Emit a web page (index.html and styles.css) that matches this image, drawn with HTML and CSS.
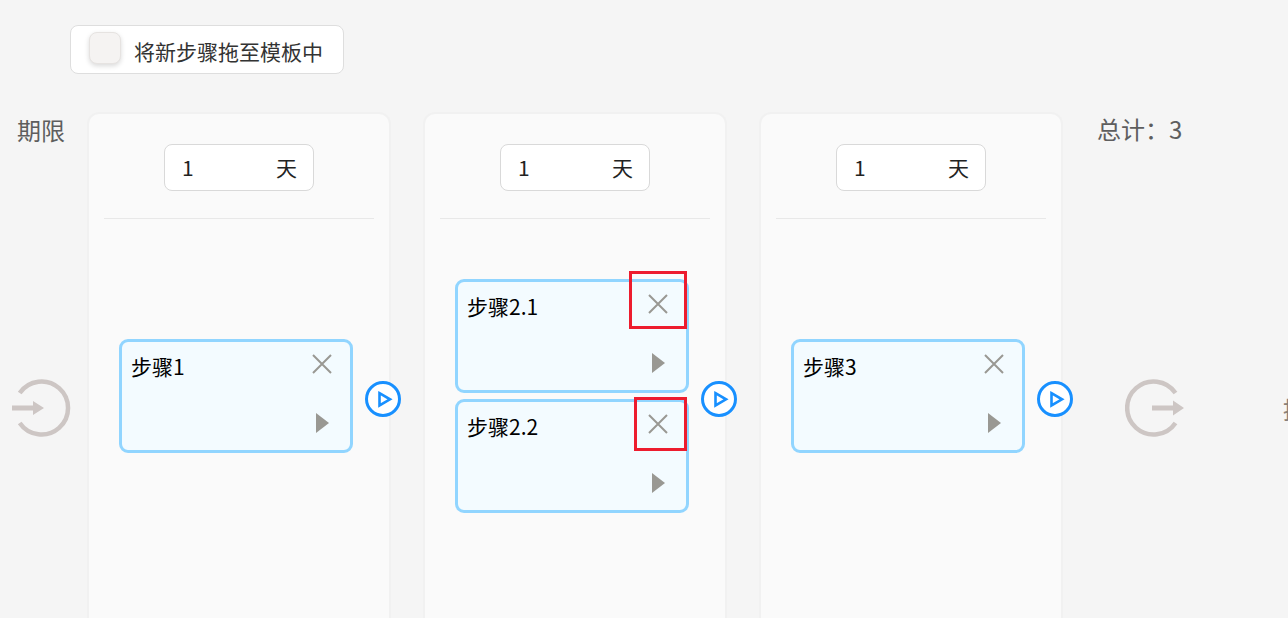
FILE: index.html
```html
<!DOCTYPE html>
<html lang="en">
<head>
  <meta charset="UTF-8">
  <title>模板步骤</title>
  <link rel="stylesheet" href="styles.css">
</head>
<body>

<div class="toolbar">
  <div class="new-step">
    <span class="handle"></span>
    <span class="new-step-text">将新步骤拖至模板中</span>
  </div>
</div>

<div class="board">
  <div class="side side-start">
    <div class="side-label">期限</div>
    <svg class="flow-icon" width="62" height="62" viewBox="0 0 62 62">
      <path d="M7.7 16A26.5 26.5 0 1 1 7.7 46" fill="none" stroke="#cdc6c4" stroke-width="4.5"/>
      <path d="M0 28.5H21V24L32 31 21 38V33.5H0Z" fill="#cdc6c4"/>
    </svg>
  </div>

  <div class="column">
    <div class="days"><span>1</span><span>天</span></div>
    <div class="column-body">
      <div class="step">
        <span class="step-name">步骤1</span>
        <svg class="step-close" width="20" height="20" viewBox="0 0 20 20"><path d="M1 1L19 19M19 1L1 19" stroke="#999893" stroke-width="2"/></svg>
        <span class="step-arrow"></span>
      </div>
    </div>
    <svg class="next" width="36" height="36" viewBox="0 0 36 36">
      <circle cx="18" cy="18" r="16.5" fill="#fff" stroke="#1890ff" stroke-width="3"/>
      <path d="M14.5 12.2L25 18.3 14.5 24.4Z" fill="none" stroke="#1890ff" stroke-width="2.6"/>
    </svg>
  </div>

  <div class="column">
    <div class="days"><span>1</span><span>天</span></div>
    <div class="column-body">
      <div class="step">
        <span class="step-name">步骤2.1</span>
        <svg class="step-close" width="20" height="20" viewBox="0 0 20 20"><path d="M1 1L19 19M19 1L1 19" stroke="#999893" stroke-width="2"/></svg>
        <span class="step-arrow"></span>
        <span class="mark mark-a"></span>
      </div>
      <div class="step">
        <span class="step-name">步骤2.2</span>
        <svg class="step-close" width="20" height="20" viewBox="0 0 20 20"><path d="M1 1L19 19M19 1L1 19" stroke="#999893" stroke-width="2"/></svg>
        <span class="step-arrow"></span>
        <span class="mark mark-b"></span>
      </div>
    </div>
    <svg class="next" width="36" height="36" viewBox="0 0 36 36">
      <circle cx="18" cy="18" r="16.5" fill="#fff" stroke="#1890ff" stroke-width="3"/>
      <path d="M14.5 12.2L25 18.3 14.5 24.4Z" fill="none" stroke="#1890ff" stroke-width="2.6"/>
    </svg>
  </div>

  <div class="column">
    <div class="days"><span>1</span><span>天</span></div>
    <div class="column-body">
      <div class="step">
        <span class="step-name">步骤3</span>
        <svg class="step-close" width="20" height="20" viewBox="0 0 20 20"><path d="M1 1L19 19M19 1L1 19" stroke="#999893" stroke-width="2"/></svg>
        <span class="step-arrow"></span>
      </div>
    </div>
    <svg class="next" width="36" height="36" viewBox="0 0 36 36">
      <circle cx="18" cy="18" r="16.5" fill="#fff" stroke="#1890ff" stroke-width="3"/>
      <path d="M14.5 12.2L25 18.3 14.5 24.4Z" fill="none" stroke="#1890ff" stroke-width="2.6"/>
    </svg>
  </div>

  <div class="side side-end">
    <div class="side-label">总计：3</div>
    <div class="end-row">
      <svg class="flow-icon" width="62" height="62" viewBox="0 0 62 62">
        <path d="M50.5 16A26.5 26.5 0 1 0 50.5 46" fill="none" stroke="#cdc6c4" stroke-width="4.5"/>
        <path d="M27 28.5H48V23.5L59 31 48 38.5V33.5H27Z" fill="#cdc6c4"/>
      </svg>
      <span class="end-text">提交</span>
    </div>
  </div>
</div>

</body>
</html>
```

FILE: styles.css
```css
html, body { height: 100%; }
body { margin: 0; background: #f5f5f5; font-family: "Noto Sans CJK SC", "Noto Sans", sans-serif; overflow: hidden; }

.toolbar { height: 89px; padding: 25px 0 0 70px; }
.new-step { display: flex; align-items: center; gap: 13px; width: 274px; height: 49px; box-sizing: border-box; padding-left: 18px; background: #fff; border: 1px solid #dedede; border-radius: 8px; font-size: 21px; color: #333; }
.new-step-text { padding-top: 3px; }
.handle { width: 32px; height: 32px; box-sizing: border-box; margin-top: -4px; background: #f5f3f2; border: 1px solid #e6e3e1; border-radius: 8px; box-shadow: 0 2px 5px rgba(0, 0, 0, 0.15); }

.board { display: flex; gap: 36px; align-items: flex-start; height: 504px; }

.side { flex: none; }
.side-label { font-size: 24px; line-height: 32px; color: #5e5e5e; white-space: nowrap; }
.side-start { width: 53px; }
.side-start .side-label { margin-left: 17px; }
.side-start .flow-icon { display: block; margin: 231px 0 0 12px; }
.side-end { width: 191px; }
.side-end .side-label { margin-top: -1px; }
.end-row { display: flex; align-items: center; margin: 232px 0 0 28px; }
.flow-icon { flex: none; }
.end-text { margin-left: 96px; font-size: 24px; color: #8a8078; white-space: nowrap; }

.column { position: relative; flex: none; width: 300px; height: 504px; box-sizing: border-box; padding: 30px 15px 0; background: #fafafa; border-radius: 10px 10px 0 0; box-shadow: 0 0 0 2px #f1f1f1; }
.days { display: flex; justify-content: space-between; align-items: center; width: 150px; height: 47px; box-sizing: border-box; margin: 0 auto; padding: 0 16px 2px 17px; background: #fff; border: 1px solid #d9d9d9; border-radius: 8px; font-size: 21px; color: #222; }

.column-body { display: flex; flex-direction: column; justify-content: center; gap: 6px; height: 354px; margin-top: 27px; padding-left: 15px; border-top: 1px solid #e8e8e8; }

.step { position: relative; flex: none; width: 234px; height: 114px; box-sizing: border-box; padding: 9px; background: #f3fbff; border: 3px solid #91d5ff; border-radius: 9px; font-size: 21px; line-height: 30px; color: #000; }
.step-close { position: absolute; top: 12px; right: 18px; }
.step-arrow { position: absolute; right: 21px; bottom: 17px; border-left: 13px solid #999893; border-top: 10px solid transparent; border-bottom: 10px solid transparent; }

.next { position: absolute; top: 267px; right: -12px; }

.mark { position: absolute; box-sizing: border-box; border: 3px solid #ed1c2e; }
.mark-a { left: 171px; top: -11px; width: 58px; height: 58px; }
.mark-b { left: 176px; top: -5px; width: 53px; height: 54px; }
```
